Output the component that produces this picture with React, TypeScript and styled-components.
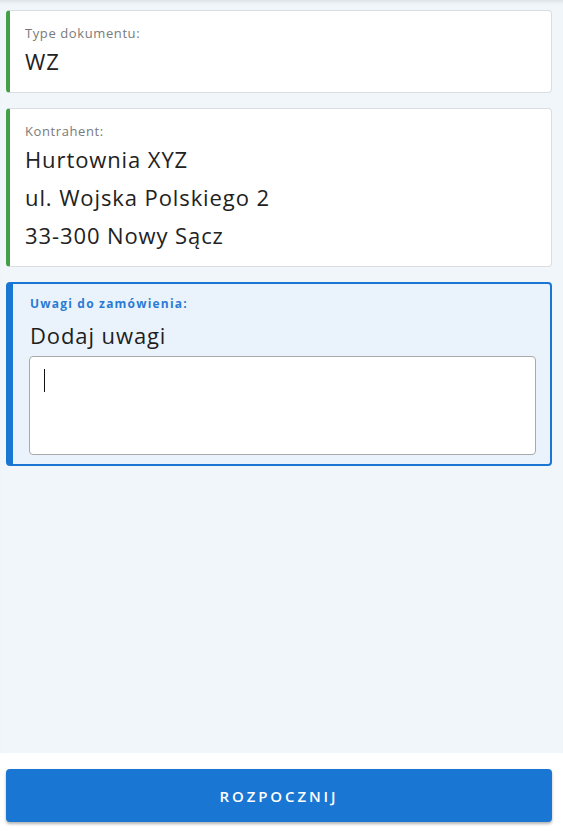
import React from "react";
import styled, { createGlobalStyle } from "styled-components";

const Global = createGlobalStyle`
  html, body { margin: 0; padding: 0; height: 100%; }
  body { background: #f1f6fb; font-family: "Open Sans", "Noto Sans", sans-serif; }
  #root { height: 100%; }
  * { box-sizing: border-box; }
`;

const Page = styled.div`
  display: flex;
  flex-direction: column;
  height: 831px;
  background: #f1f6fb;
  box-shadow: inset 0 5px 5px -4px rgba(0, 0, 0, 0.12);
`;

const Content = styled.div`
  flex: 1;
  display: flex;
  flex-direction: column;
  gap: 15px;
  padding: 10px 11px 0 6px;
`;

const InfoCard = styled.div<{ $accent: string }>`
  background: #fff;
  border: 1px solid #dadde1;
  border-left: 4px solid ${(p) => p.$accent};
  border-radius: 4px;
  padding: 13px 15px 12px 15px;
  display: flex;
  flex-direction: column;
`;

const Label = styled.div`
  font-size: 13px;
  color: #7a7a7a;
  letter-spacing: 0.6px;
  line-height: 18px;
`;

const Value = styled.div`
  font-size: 22px;
  color: #222;
  line-height: 38px;
  letter-spacing: 0.9px;
`;

const NotesCard = styled.div`
  background: #eaf3fc;
  border: 2px solid #1976d2;
  border-left-width: 7px;
  border-radius: 4px;
  padding: 11px 14px 9px 16px;
  display: flex;
  flex-direction: column;
`;

const NotesLabel = styled.div`
  font-size: 12px;
  font-weight: 700;
  color: #2a7bd3;
  letter-spacing: 1.2px;
  line-height: 18px;
  padding-left: 1px;
`;

const NotesTitle = styled.div`
  font-size: 22px;
  color: #1e1e1e;
  line-height: 36px;
  letter-spacing: 0.9px;
  margin: 4px 0 3px 1px;
`;

const FieldWrap = styled.div`
  position: relative;
`;

const Notes = styled.textarea`
  display: block;
  width: 100%;
  height: 99px;
  resize: none;
  border: 1px solid #a9a9a9;
  border-radius: 4px;
  background: #fff;
  padding: 10px 14px;
  font-family: inherit;
  font-size: 16px;
  outline: none;
  caret-color: transparent;
`;

const Caret = styled.span`
  position: absolute;
  left: 15px;
  top: 13px;
  width: 1px;
  height: 23px;
  background: #111;
`;

const Footer = styled.div`
  background: #fff;
  padding: 16px 11px 9px 6px;
`;

const StartButton = styled.button`
  display: block;
  width: 100%;
  height: 53px;
  border: none;
  border-radius: 4px;
  background: #1976d2;
  color: #fff;
  font-family: inherit;
  font-size: 15px;
  font-weight: 600;
  letter-spacing: 2.9px;
  box-shadow: 0 2px 3px rgba(0, 0, 0, 0.3);
  cursor: pointer;
`;

export default function App() {
  return (
    <>
      <Global />
      <Page>
        <Content>
          <InfoCard $accent="#43a047">
            <Label>Type dokumentu:</Label>
            <Value>WZ</Value>
          </InfoCard>
          <InfoCard $accent="#43a047">
            <Label>Kontrahent:</Label>
            <Value>Hurtownia XYZ</Value>
            <Value>ul. Wojska Polskiego 2</Value>
            <Value>33-300 Nowy Sącz</Value>
          </InfoCard>
          <NotesCard>
            <NotesLabel>Uwagi do zamówienia:</NotesLabel>
            <NotesTitle>Dodaj uwagi</NotesTitle>
            <FieldWrap>
              <Notes />
              <Caret />
            </FieldWrap>
          </NotesCard>
        </Content>
        <Footer>
          <StartButton>ROZPOCZNIJ</StartButton>
        </Footer>
      </Page>
    </>
  );
}
